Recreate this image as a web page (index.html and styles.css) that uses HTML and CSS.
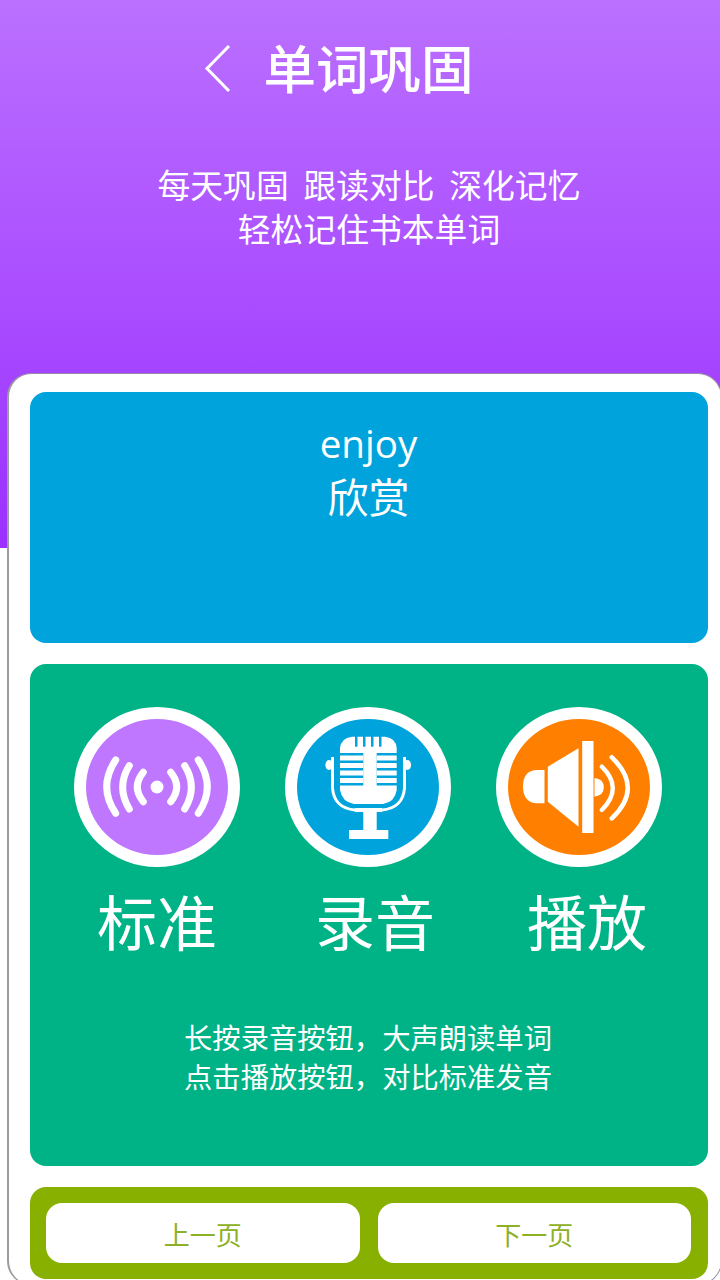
FILE: index.html
```html
<!DOCTYPE html>
<html lang="zh">
<head>
<meta charset="utf-8">
<title>单词巩固</title>
<link rel="stylesheet" href="styles.css">
</head>
<body>
<div class="page">
  <header class="hero">
    <div class="titlebar">
      <svg class="back" viewBox="0 0 30 52" width="30" height="52"><path d="M27 6 L5 28.5 L27 51" fill="none" stroke="#fff" stroke-width="3"/></svg>
      <h1>单词巩固</h1>
    </div>
    <p class="intro">每天巩固&nbsp;&nbsp;跟读对比&nbsp;&nbsp;深化记忆<br>轻松记住书本单词</p>
  </header>
  <main class="card">
    <section class="word">
      <div class="en">enjoy</div>
      <div class="zh">欣赏</div>
    </section>
    <section class="practice">
      <div class="tools">
        <span class="disc disc-purple">
          <svg viewBox="0 0 142 142" width="142" height="142" fill="none" stroke="#fff" stroke-width="7" stroke-linecap="round">
            <circle cx="71" cy="71" r="6.5" fill="#fff" stroke="none"/>
            <path d="M57.3 56.3 Q45.3 71 57.3 85.7"/><path d="M84.7 56.3 Q96.7 71 84.7 85.7"/>
            <path d="M43.3 49.7 Q30 71 43.3 93"/><path d="M98.7 49.7 Q112 71 98.7 93"/>
            <path d="M29.7 44 Q11.7 71 29.7 97.3"/><path d="M112.3 44 Q130.3 71 112.3 97.3"/>
          </svg>
        </span>
        <span class="disc disc-blue">
          <svg viewBox="0 0 142 142" width="142" height="142" fill="#fff">
            <path d="M43 37 V32 Q44 22 55 20.7 H58 V30.7 H60.5 V20.7 H66 V30.7 H68.5 V20.7 H74 V30.7 H76.5 V20.7 H82 V30.7 H84.5 V20.7 H88 Q99 22 99.7 32 V37 Z"/>
            <rect x="43" y="39.5" width="23.3" height="5"/><rect x="79.7" y="39.5" width="20" height="5"/>
            <rect x="43" y="47" width="23.3" height="5"/><rect x="79.7" y="47" width="20" height="5"/>
            <rect x="43" y="54.5" width="23.3" height="5"/><rect x="79.7" y="54.5" width="20" height="5"/>
            <rect x="43" y="62" width="23.3" height="5"/><rect x="79.7" y="62" width="20" height="5"/>
            <rect x="66.3" y="36" width="13.4" height="34"/>
            <path d="M43 69.5 H99.7 V74 Q98 86 86 88 H57 Q45 86 43 74 Z"/>
            <path d="M35.5 41 V72 Q37 92 58 94 H85 Q106 92 107.5 72 V41" fill="none" stroke="#fff" stroke-width="3"/>
            <ellipse cx="32" cy="49" rx="3.6" ry="5"/><ellipse cx="110.5" cy="49" rx="3.6" ry="5"/>
            <rect x="58" y="92" width="27" height="4"/>
            <rect x="66.3" y="94" width="13.4" height="22"/><rect x="52" y="114" width="39.3" height="9"/>
          </svg>
        </span>
        <span class="disc disc-orange">
          <svg viewBox="0 0 142 142" width="142" height="142" fill="#fff">
            <path d="M36.5 54 H28 Q15 55 15 70.5 Q15 86 28 87.3 H36.5 Z"/>
            <path d="M39.8 50.7 L70.5 32.3 V110.7 L39.8 85.7 Z"/>
            <rect x="74.2" y="25" width="11.3" height="92"/>
            <path d="M86.5 62 Q95.8 63 95.8 71.3 Q95.8 79.5 86.5 80.7 Z"/>
            <path d="M93.8 50.7 Q115.8 72 93.8 94" fill="none" stroke="#fff" stroke-width="4.4" stroke-linecap="round"/>
            <path d="M103.8 41.3 Q135.8 72 103.8 102.3" fill="none" stroke="#fff" stroke-width="4.6" stroke-linecap="round"/>
          </svg>
        </span>
      </div>
      <div class="labels">
        <span class="tool-label">标准</span>
        <span class="tool-label">录音</span>
        <span class="tool-label">播放</span>
      </div>
      <p class="hint">长按录音按钮，大声朗读单词<br>点击播放按钮，对比标准发音</p>
    </section>
    <nav class="pager">
      <a class="pager-btn">上一页</a>
      <a class="pager-btn">下一页</a>
    </nav>
  </main>
</div>
</body>
</html>
```
FILE: styles.css
```css
* { box-sizing: border-box; }
html, body { margin: 0; padding: 0; background: #fff; }
body {
  width: 720px;
  height: 1280px;
  overflow: hidden;
  font-family: "Noto Sans CJK SC", "Liberation Sans", sans-serif;
  color: #fff;
}
.page { width: 720px; height: 1280px; overflow: hidden; }

.hero {
  height: 548px;
  padding-top: 32px;
  background: linear-gradient(180deg, #bb70ff 0%, #9b30ff 100%);
}
.titlebar {
  display: flex;
  align-items: center;
  justify-content: center;
  height: 68px;
  padding-right: 44px;
  gap: 31px;
}
.back { flex: none; }
h1 {
  margin: 0;
  font-size: 52.5px;
  line-height: 68px;
  font-weight: 500;
}
.intro {
  margin: 62px 0 0;
  font-size: 32.8px;
  line-height: 44px;
  text-align: center;
  padding-left: 18px;
  font-weight: 400;
}

.card {
  width: 715px;
  height: 912px;
  margin: -175px 0 0 7px;
  padding: 18px 0 0 21px;
  background: #fff;
  border: 1px solid #9a8aa8;
  border-left: 2px solid #9c9c9c;
  border-radius: 24px;
}
.word, .practice, .pager {
  width: 678px;
  border-radius: 16px;
}
.word {
  height: 251px;
  background: #00a3dc;
  padding-top: 25px;
  text-align: center;
  line-height: 52px;
}
.en { font-family: "Open Sans", "Liberation Sans", sans-serif; font-size: 38.6px; padding-right: 1px; }
.zh { font-size: 41px; padding-right: 1px; }

.practice {
  height: 502px;
  margin-top: 21px;
  background: #00b386;
  padding-top: 43px;
}
.tools {
  display: flex;
  padding: 0 46px 0 44px;
  justify-content: space-between;
}
.disc {
  display: flex;
  flex: none;
  align-items: center;
  justify-content: center;
  width: 166px;
  height: 160px;
  border-radius: 50%;
  border: 12px solid #fff;
  overflow: hidden;
}
.disc svg { flex: none; }
.disc-purple { background: #c077ff; }
.disc-blue { background: #00a3dc; }
.disc-orange { background: #ff8000; }
.labels {
  display: grid;
  grid-template-columns: 218px 212px 120px;
  padding-left: 67px;
  margin-top: 12px;
}
.tool-label {
  font-size: 60px;
  line-height: 82px;
  font-weight: 400;
}
.hint {
  margin: 56px 0 0;
  padding-right: 2px;
  text-align: center;
  font-size: 28.3px;
  line-height: 39px;
  font-weight: 400;
}

.pager {
  display: flex;
  gap: 18px;
  height: 92px;
  margin-top: 21px;
  padding: 16px 17px 16px 16px;
  background: #88b000;
}
.pager-btn {
  flex: 1;
  display: flex;
  align-items: center;
  justify-content: center;
  background: #fff;
  border-radius: 16px;
  color: #8db024;
  font-size: 26px;
  font-weight: 400;
}
```
